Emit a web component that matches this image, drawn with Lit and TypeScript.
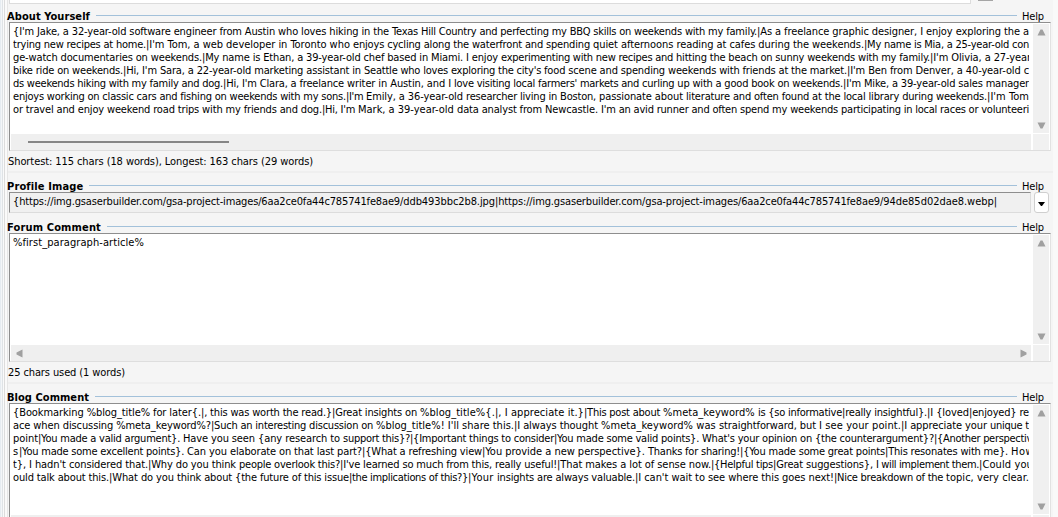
import { LitElement, html, css, svg } from 'lit';
import { customElement, property } from 'lit/decorators.js';

// [start x, text]; every line closes with the x where its last run ends
type Run = [number, string];
interface Line {
  runs: Run[];
  end: number;
}

const line = (end: number, ...runs: Run[]): Line => ({ runs, end });

const ABOUT: Line[] = [
  line(1029, [13, "{I'm Jake, a 32-year-old software engineer from Austin who loves hiking in the "], [392, 'Texas Hill Country and perfecting my BBQ skills on '], [634, 'weekends with my family.'], [757, '|As a freelance graphic designer, I enjoy exploring the a']),
  line(1029, [13, 'trying new recipes at home.'], [146, "|I'm Tom, a web developer in Toronto who "], [353, 'enjoys cycling along the waterfront and spending '], [593, 'quiet afternoons reading at cafes during the weekends.'], [864, '|My name is Mia, a 25-year-old con']),
  line(1031, [13, 'ge-watch documentaries on weekends.'], [202, '|My name is Ethan, a 39-year-old chef based in '], [431, 'Miami. I enjoy '], [501, 'experimenting with new recipes and '], [676, 'hitting the beach on sunny weekends with my family.'], [930, "|I'm Olivia, a 27-year"]),
  line(1029, [13, 'bike ride on weekends.'], [123, "|Hi, I'm Sara, a 22-year-old marketing assistant in "], [364, "Seattle who loves exploring the city's "], [544, 'food scene and spending '], [668, 'weekends with friends at the market.'], [847, "|I'm Ben from Denver, a 40-year-old c"]),
  line(1029, [13, 'ds weekends hiking with my family and dog.'], [223, "|Hi, I'm Clara, a freelance "], [347, 'writer in Austin, and I '], [454, 'love visiting local '], [538, "farmers' markets and "], [642, 'curling up with a good book on weekends.'], [843, "|I'm Mike, a 39-year-old sales manager"]),
  line(1029, [13, 'enjoys working on classic cars and fishing on weekends with my sons.'], [346, "|I'm "], [366, 'Emily, a 36-year-old '], [466, 'researcher living in Boston, '], [599, 'passionate about '], [686, 'literature and often found at the local library during weekends.'], [987, "|I'm Tom"]),
  line(1029, [13, 'or travel and enjoy weekend road trips with my friends and dog.'], [322, "|Hi, I'm "], [358, 'Mark, a 39-year-old '], [457, 'data analyst from '], [545, 'Newcastle. '], [601, "I'm an avid runner and often spend my weekends "], [841, 'participating in local races or volunteeri']),
];

const IMAGE: Line[] = [
  line(997, [13, '{https://img.gsaserbuilder.com/gsa-project-images/6aa2ce0fa44c785741fe8ae9'], [400, '/ddb493bbc2b8.jpg'], [495, '|https://img.gsaserbuilder.com'], [642, '/gsa-project-images'], [738, '/6aa2ce0fa44c785741fe8ae9'], [880, '/94de85d02dae8.webp|']),
];

const FORUM: Line[] = [line(144, [13, '%first_paragraph-article%'])];

const BLOG: Line[] = [
  line(1029, [13, '{Bookmarking %blog_title% for later{.'], [201, '|, this was worth the read.}'], [332, '|Great insights on '], [420, '%blog_title%{.|, I appreciate it.}'], [584, '|This post about '], [663, '%meta_keyword% '], [758, 'is {so informative'], [842, '|really insightful}.'], [927, '|I {loved'], [969, '|enjoyed} re']),
  line(1029, [13, 'ace when discussing %meta_keyword%?'], [211, '|Such an interesting discussion on '], [376, "%blog_title%! I'll share this."], [514, '|I always thought '], [601, '%meta_keyword% was '], [719, 'straightforward, but '], [819, 'I see your point.'], [901, '|I appreciate your '], [990, 'unique t']),
  line(1032, [13, 'point'], [38, '|You made a valid argument}. '], [183, 'Have you seen '], [258, '{any research to '], [343, 'support this}?'], [410, '|{Important things to consider'], [554, '|You made some valid points}. '], [702, "What's your opinion on "], [815, '{the counterargument}?'], [934, '|{Another perspectiv']),
  line(1034, [13, 's'], [19, '|You made some excellent points}. '], [187, 'Can you '], [230, 'elaborate on '], [294, 'that last part?'], [362, '|{What a refreshing view'], [482, '|You provide a new perspective}. '], [648, 'Thanks for sharing!'], [740, '|{You made some great points'], [885, '|This resonates with me}. '], [1011, 'How']),
  line(1033, [13, "t}, I hadn't considered that."], [148, '|Why do you think '], [239, 'people overlook this?'], [340, "|I've learned so much from this, "], [495, 'really useful!'], [557, '|That makes a lot of sense now.'], [711, '|{Helpful tips'], [773, '|Great suggestions}, '], [876, 'I will implement them.'], [979, '|Could you']),
  line(1029, [13, 'ould talk about this.'], [109, '|What do you '], [177, 'think about '], [235, '{the future of this issue'], [349, '|the implications of this?}'], [468, '|Your '], [497, 'insights are always valuable.'], [635, "|I can't wait to "], [708, 'see where this goes next!'], [834, '|Nice breakdown of the '], [946, 'topic, very clear.']),
];

@customElement('fit-text')
export class FitText extends LitElement {
  @property() text = '';
  @property({ type: Number }) width = 0;

  static styles = css`
    :host {
      display: block;
      flex: none;
    }
    .run {
      display: inline-block;
      white-space: pre;
    }
  `;

  firstUpdated() {
    this.fit();
    document.fonts.ready.then(() => this.fit());
  }

  // spreads the characters over the requested width
  fit() {
    const run = this.renderRoot.querySelector('.run') as HTMLElement;
    run.style.letterSpacing = '0';
    const natural = run.getBoundingClientRect().width;
    run.style.letterSpacing = `${(this.width - natural) / this.text.length}px`;
    this.style.width = `${this.width}px`;
  }

  render() {
    return html`<span class="run">${this.text}</span>`;
  }
}

@customElement('text-lines')
export class TextLines extends LitElement {
  @property({ attribute: false }) lines: Line[] = [];

  static styles = css`
    :host {
      display: block;
      overflow: hidden;
    }
    .line {
      display: flex;
      height: 13px;
      line-height: 13px;
    }
  `;

  render() {
    return this.lines.map(
      ({ runs, end }) => html`
        <div class="line">
          ${runs.map(([x, text], i) => html`<fit-text .text=${text} .width=${(runs[i + 1]?.[0] ?? end) - x}></fit-text>`)}
        </div>
      `
    );
  }
}

@customElement('section-head')
export class SectionHead extends LitElement {
  @property() label = '';
  @property({ type: Number }) width = 0;

  static styles = css`
    :host {
      display: flex;
      flex: none;
      align-items: center;
      height: 14px;
      line-height: 14px;
      padding: 0 14px 0 7px;
    }
    .title {
      font-weight: bold;
      padding-top: 4px;
    }
    .rule {
      flex: 1;
      height: 1px;
      margin: 1px 5px 0 6px;
      background: #a3c1da;
    }
    .help {
      padding-top: 4px;
    }
  `;

  render() {
    return html`
      <fit-text class="title" .text=${this.label} .width=${this.width}></fit-text>
      <div class="rule"></div>
      <fit-text class="help" .text=${'Help'} .width=${22}></fit-text>
    `;
  }
}

const arrow = (points: string) => svg`<polygon points=${points} fill="#a0a0a0" />`;

@customElement('memo-box')
export class MemoBox extends LitElement {
  @property({ attribute: false }) lines: Line[] = [];
  @property() scroll: 'thumb' | 'arrows' = 'arrows';

  static styles = css`
    :host {
      display: block;
      flex: none;
      height: 129px;
      margin: 0 7px 0 9px;
    }
    .box {
      box-sizing: border-box;
      display: grid;
      grid-template-columns: 1fr 16px;
      grid-template-rows: 110px 16px;
      gap: 1px 2px;
      height: 100%;
      padding-right: 1px;
      border: 1px solid #8e8e8e;
      border-right-color: #e2e2e2;
      border-bottom-color: #dedede;
      background: #fff;
    }
    .text {
      margin: 2px 2px 0 3px;
    }
    .vertical {
      display: flex;
      flex-direction: column;
      justify-content: space-between;
      align-items: center;
      margin-top: 1px;
      padding: 5px 0 4px;
      box-sizing: border-box;
      background: #f0f0f0;
    }
    .horizontal {
      display: flex;
      justify-content: space-between;
      align-items: center;
      margin-left: 1px;
      padding: 0 4px 0 5px;
      background: #efefef;
    }
    .thumb {
      width: 201px;
      height: 2px;
      margin-left: 12px;
      background: #868686;
    }
    .corner {
      background: #f1f1f1;
    }
    svg {
      display: block;
    }
  `;

  render() {
    return html`
      <div class="box">
        <text-lines class="text" .lines=${this.lines}></text-lines>
        <div class="vertical">
          <svg width="9" height="7">${arrow('0.5,6.5 3.5,0.5 5.5,0.5 8.5,6.5')}</svg>
          <svg width="9" height="7">${arrow('0.5,0.5 8.5,0.5 5.5,6.5 3.5,6.5')}</svg>
        </div>
        <div class="horizontal">
          ${this.scroll === 'thumb'
            ? html`<div class="thumb"></div>`
            : html`
                <svg width="7" height="9">${arrow('6.5,0.5 6.5,8.5 0.5,5.5 0.5,3.5')}</svg>
                <svg width="7" height="9">${arrow('0.5,0.5 6.5,3.5 6.5,5.5 0.5,8.5')}</svg>
              `}
        </div>
        <div class="corner"></div>
      </div>
    `;
  }
}

@customElement('app-root')
export class AppRoot extends LitElement {
  static styles = css`
    :host {
      display: flex;
      flex-direction: column;
      box-sizing: border-box;
      height: 517px;
      overflow: hidden;
      color: #000;
      font: 11px/13px 'DejaVu Sans Condensed', 'DejaVu Sans', sans-serif;
      font-stretch: condensed;
      background: linear-gradient(90deg, #e6ecf1 0 1px, #f4f6f8 1px 2px, #dfe3e6 2px 3px, #fafafa 3px 4px, #dcdcdc 4px 5px, #fafafa 5px 7px, #e6e6e6 7px 8px, #f5f5f5 8px 1053px, #f9f9f9 1053px);
    }
    .previous {
      display: flex;
      flex: none;
      gap: 7px;
      height: 8px;
      padding-left: 9px;
    }
    .field {
      width: 960px;
      height: 3px;
      border: solid #dcdcdc;
      border-width: 0 1px 1px;
      background: #fff;
    }
    .stub {
      width: 15px;
      height: 1px;
      background: #a5a5a5;
    }
    .status {
      flex: none;
      height: 20px;
      padding: 4px 0 0 8px;
      box-sizing: border-box;
    }
    .divider {
      flex: none;
      height: 2px;
      margin: 0 5px 5px 8px;
      background: #efefef;
    }
    .image {
      display: flex;
      flex: none;
      gap: 3px;
      height: 21px;
      margin: 0 0 6px 9px;
    }
    .path {
      box-sizing: border-box;
      width: 1022px;
      padding: 2px 0 0 3px;
      border: 1px solid #8e8e8e;
      border-right-color: #dcdcdc;
      border-bottom-color: #dcdcdc;
      background: #f0f0f0;
    }
    .drop {
      box-sizing: border-box;
      display: flex;
      align-items: center;
      justify-content: center;
      width: 15px;
      padding-top: 3px;
      border: 1px solid #cfcfcf;
      border-radius: 3px;
      background: #fff;
    }
  `;

  render() {
    return html`
      <div class="previous">
        <div class="field"></div>
        <div class="stub"></div>
      </div>
      <section-head label="About Yourself" .width=${83}></section-head>
      <memo-box .lines=${ABOUT} scroll="thumb"></memo-box>
      <div class="status"><fit-text .text=${'Shortest: 115 chars (18 words), Longest: 163 chars (29 words)'} .width=${305}></fit-text></div>
      <div class="divider"></div>
      <section-head label="Profile Image" .width=${76}></section-head>
      <div class="image">
        <text-lines class="path" .lines=${IMAGE}></text-lines>
        <div class="drop">
          <svg width="7" height="4"><polygon points="0,0 7,0 4,4 3,4" /></svg>
        </div>
      </div>
      <section-head label="Forum Comment" .width=${94}></section-head>
      <memo-box .lines=${FORUM}></memo-box>
      <div class="status"><fit-text .text=${'25 chars used (1 words)'} .width=${117}></fit-text></div>
      <div class="divider"></div>
      <section-head label="Blog Comment" .width=${82}></section-head>
      <memo-box .lines=${BLOG}></memo-box>
    `;
  }
}
